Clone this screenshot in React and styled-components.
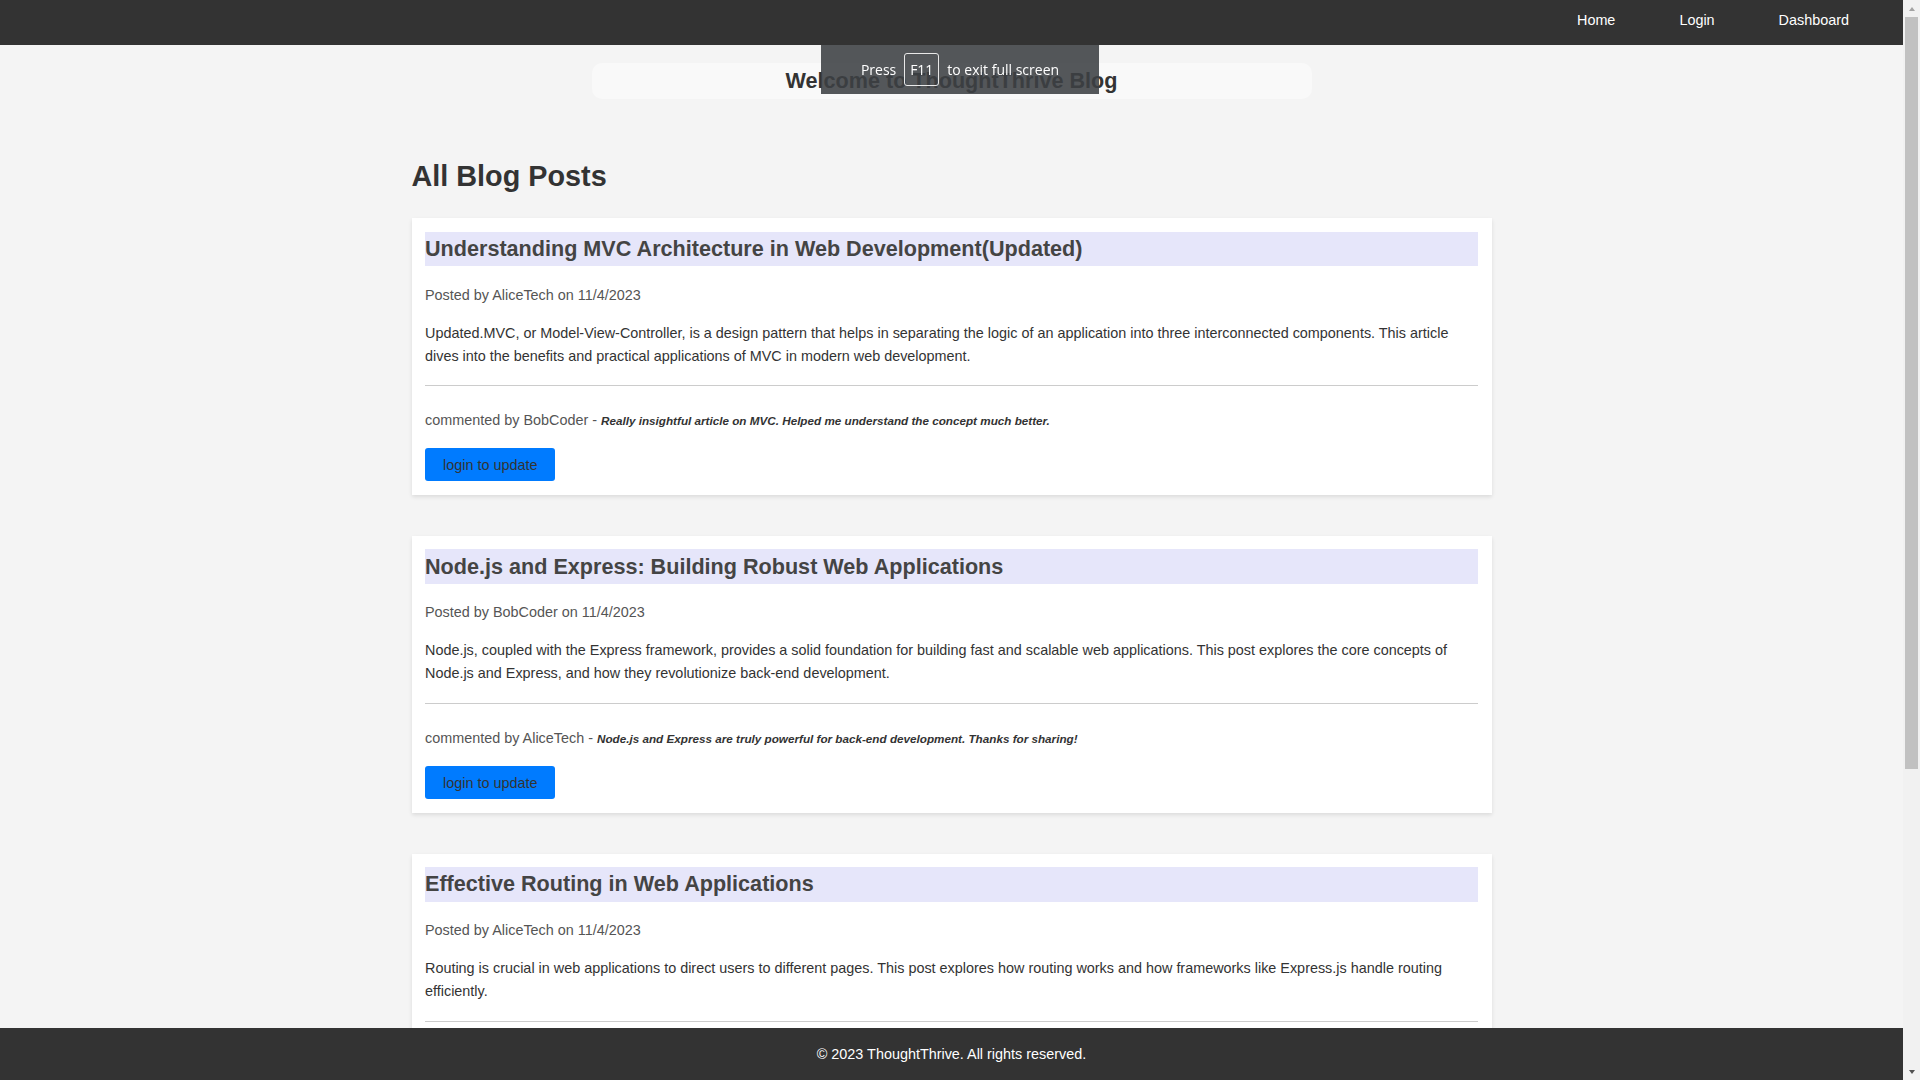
import React from 'react'
import styled, {createGlobalStyle} from "styled-components"

const posts = [
    {
        id: 1,
        title: "Understanding MVC Architecture in Web Development(Updated)",
        author: "AliceTech",
        date: "11/4/2023",
        body: "Updated.MVC, or Model-View-Controller, is a design pattern that helps in separating the logic of an application into three interconnected components. This article dives into the benefits and practical applications of MVC in modern web development.",
        comment: {author: "BobCoder", text: "Really insightful article on MVC. Helped me understand the concept much better."}
    },
    {
        id: 2,
        title: "Node.js and Express: Building Robust Web Applications",
        author: "BobCoder",
        date: "11/4/2023",
        body: "Node.js, coupled with the Express framework, provides a solid foundation for building fast and scalable web applications. This post explores the core concepts of Node.js and Express, and how they revolutionize back-end development.",
        comment: {author: "AliceTech", text: "Node.js and Express are truly powerful for back-end development. Thanks for sharing!"}
    },
    {
        id: 3,
        title: "Effective Routing in Web Applications",
        author: "AliceTech",
        date: "11/4/2023",
        body: "Routing is crucial in web applications to direct users to different pages. This post explores how routing works and how frameworks like Express.js handle routing efficiently.",
        comment: {author: "BobCoder", text: "Great breakdown of routing concepts. Very clear and easy to follow."}
    },
    {
        id: 4,
        title: "Working with Sequelize ORM in Node.js",
        author: "BobCoder",
        date: "11/4/2023",
        body: "Sequelize is a promise-based ORM for Node.js that makes it easy to work with relational databases. This post covers models, associations and queries, and how Sequelize fits into an MVC project.",
        comment: {author: "AliceTech", text: "Sequelize made my database code so much cleaner. Nice overview!"}
    }
]

export default function App() {
    return (
        <>
            <GlobalStyle/>
            <Viewport>
                <Page>
                    <Navbar>
                        <NavLink href="#">Home</NavLink>
                        <NavLink href="#">Login</NavLink>
                        <NavLink href="#">Dashboard</NavLink>
                    </Navbar>

                    <Main>
                        <Banner>
                            <BannerTitle>Welcome to ThoughtThrive Blog</BannerTitle>
                        </Banner>

                        <Container>
                            <PageTitle>All Blog Posts</PageTitle>
                            {
                                posts.map(post => (
                                    <Post key={post.id} {...post}/>
                                ))
                            }
                        </Container>
                    </Main>

                    <Footer>© 2023 ThoughtThrive. All rights reserved.</Footer>
                </Page>

                <Scrollbar>
                    <ScrollButton><Arrow $up/></ScrollButton>
                    <Track>
                        <Thumb/>
                    </Track>
                    <ScrollButton><Arrow/></ScrollButton>
                </Scrollbar>
            </Viewport>

            <FullscreenHint>
                <span>Press</span>
                <Key>F11</Key>
                <span>to exit full screen</span>
            </FullscreenHint>
        </>
    )
}

const Post = ({title, author, date, body, comment}) => {
    return (
        <Card>
            <PostTitle>{title}</PostTitle>
            <Meta>Posted by {author} on {date}</Meta>
            <Body>{body}</Body>
            <Divider/>
            <Comment>
                commented by {comment.author} - <CommentText>{comment.text}</CommentText>
            </Comment>
            <UpdateButton>login to update</UpdateButton>
        </Card>
    )
}

const GlobalStyle = createGlobalStyle`
    html, body {
        margin: 0;
        padding: 0;
        overflow: hidden;
    }
    body {
        background-color: #f4f4f4;
        font-family: "Liberation Sans", Arial, sans-serif;
        font-size: 18px;
        color: #333;
    }
`

const Viewport = styled.div`
    display: flex;
    height: 100vh;
`

const Page = styled.div`
    flex: 1;
    min-width: 0;
    overflow-y: auto;
    scrollbar-width: none;

    &::-webkit-scrollbar {
        display: none;
    }
`

const Scrollbar = styled.div`
    display: flex;
    flex-direction: column;
    width: 17px;
    flex-shrink: 0;
    background-color: #f1f1f1;
`

const ScrollButton = styled.div`
    display: flex;
    justify-content: center;
    align-items: center;
    height: 17px;
    flex-shrink: 0;
`

const Arrow = styled.div`
    width: 0;
    height: 0;
    border-left: 3.5px solid transparent;
    border-right: 3.5px solid transparent;
    ${props => props.$up
        ? `border-bottom: 4px solid #a3a3a3;`
        : `border-top: 4px solid #505050;`}
`

const Track = styled.div`
    flex: 1;
    padding: 0 2px;
`

const Thumb = styled.div`
    height: 752px;
    background-color: #c1c1c1;
`

const Navbar = styled.nav`
    display: flex;
    justify-content: flex-end;
    align-items: flex-start;
    height: 45px;
    box-sizing: border-box;
    padding-right: 22px;
    background-color: #333;
`

const NavLink = styled.a`
    padding: 11.5px 32px;
    color: #fff;
    font-size: 14.4px;
    text-decoration: none;
`

const Main = styled.main`
    padding: 18px 0 2px;
`

const Banner = styled.div`
    width: 720px;
    margin: 0 auto;
    padding: 5px 0;
    background-color: #f9f9f9;
    border-radius: 10px;
    text-align: center;
`

const BannerTitle = styled.h1`
    margin: 0;
    font-size: 21.6px;
    color: #333;
`

const Container = styled.div`
    width: 1080px;
    margin: 0 auto;
`

const PageTitle = styled.h2`
    margin: 60.5px 0 25.5px;
    font-size: 28.8px;
    color: #333;
`

const Card = styled.article`
    display: flex;
    flex-direction: column;
    align-items: flex-start;
    padding: 13.5px;
    margin-bottom: 41px;
    background-color: #fff;
    box-shadow: 0 2px 4px rgba(0, 0, 0, 0.1);

    &:last-child {
        margin-bottom: 0;
    }
`

const PostTitle = styled.h3`
    align-self: stretch;
    margin: 0 0 17.5px;
    padding: 4.3px 0;
    background-color: lavender;
    font-size: 21.6px;
    color: #444;
`

const Meta = styled.p`
    margin: 0 0 15px;
    font-size: 14.4px;
    line-height: 1.6;
    color: #555;
`

const Body = styled.p`
    margin: 0 0 17.5px;
    font-size: 14.4px;
    line-height: 1.6;
    color: #333;
`

const Divider = styled.hr`
    align-self: stretch;
    margin: 0 0 23px;
    border: none;
    border-top: 1px solid #ccc;
`

const Comment = styled.p`
    margin: 0 0 16px;
    font-size: 14.4px;
    line-height: 1.6;
    color: #555;
`

const CommentText = styled.em`
    font-size: 11.7px;
    font-weight: bold;
    color: #333;
`

const UpdateButton = styled.button`
    padding: 8.5px 18px;
    border: none;
    border-radius: 3px;
    background-color: #007bff;
    color: #333;
    font-family: inherit;
    font-size: 14.4px;
    cursor: pointer;
`

const Footer = styled.footer`
    position: sticky;
    bottom: 0;
    display: flex;
    justify-content: center;
    align-items: center;
    height: 52px;
    background-color: #333;
    color: #fff;
    font-size: 14.4px;
`

const FullscreenHint = styled.div`
    position: fixed;
    top: 45px;
    left: calc(50vw - 139px);
    width: 278px;
    height: 49px;
    display: flex;
    justify-content: center;
    align-items: center;
    gap: 8px;
    background-color: rgba(60, 64, 67, 0.88);
    color: #fff;
    font-family: "Open Sans", "Noto Sans", sans-serif;
    font-size: 14px;
`

const Key = styled.span`
    display: flex;
    align-items: center;
    justify-content: center;
    width: 35px;
    height: 33px;
    box-sizing: border-box;
    border: 1px solid #e8e8e8;
    border-radius: 3px;
`
